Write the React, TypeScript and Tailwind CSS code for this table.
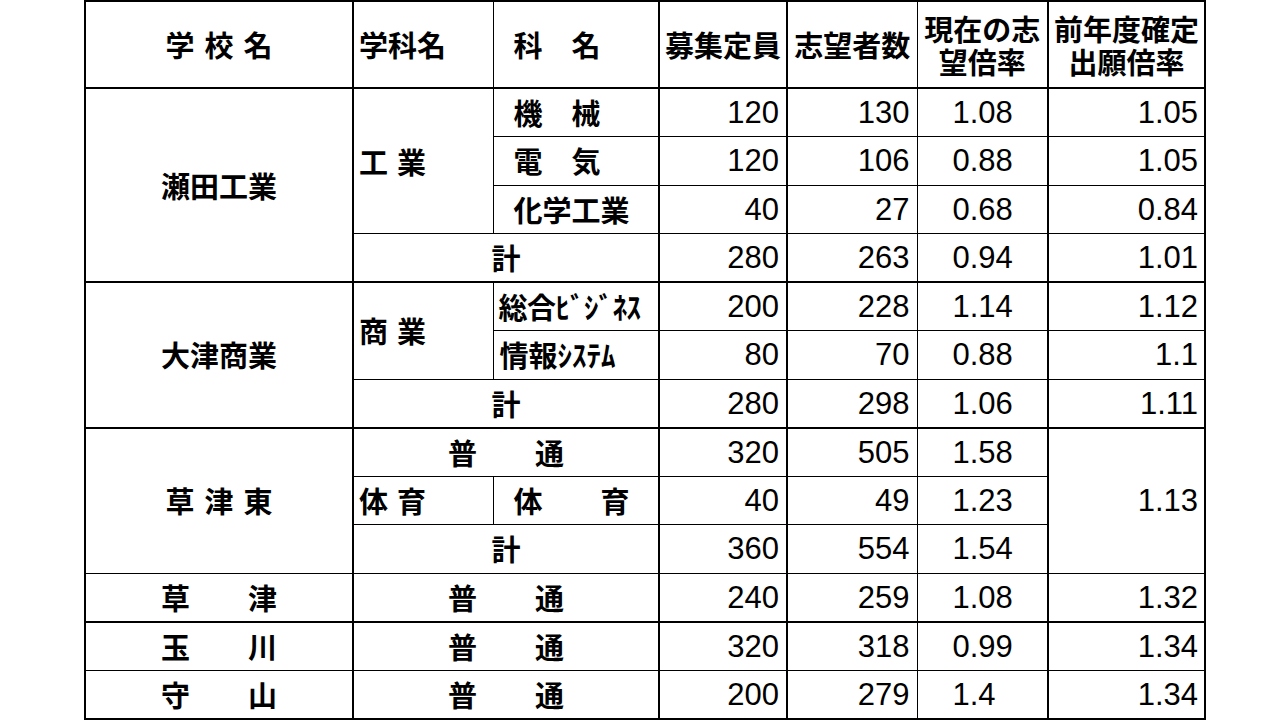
import type { ReactNode } from "react"

const cell = "border border-black p-0 align-middle"
const jp = "font-['Noto_Sans_CJK_JP','Noto_Sans',sans-serif] font-bold text-[29px] leading-none whitespace-nowrap"
const num = "font-['Liberation_Sans',Arial,sans-serif] text-[31px] leading-none"

type Nums = { cap: string; app: string; rate: string; prev?: string; thick?: boolean }

function NumCells({ cap, app, rate, prev, thick }: Nums) {
  const b = thick ? "border-b-2" : ""
  return (
    <>
      <td className={`${cell} ${num} ${b} border-r-2 pr-[7px] text-right`}>{cap}</td>
      <td className={`${cell} ${num} ${b} pr-[7px] text-right`}>{app}</td>
      <td className={`${cell} ${num} ${b} border-r-2 pl-[35px] text-left`}>{rate}</td>
      {prev !== undefined && <td className={`${cell} ${num} ${b} pr-[6px] text-right`}>{prev}</td>}
    </>
  )
}

function Row({ children }: { children: ReactNode }) {
  return <tr className="h-[48.5px]">{children}</tr>
}

export default function App() {
  return (
    <div className="min-h-screen bg-white text-black">
      <table className="ml-[84px] w-[1122px] table-fixed border-collapse border-2 border-black">
        <colgroup>
          <col className="w-[268px]" />
          <col className="w-[140px]" />
          <col className="w-[166px]" />
          <col className="w-[128px]" />
          <col className="w-[130px]" />
          <col className="w-[131px]" />
          <col className="w-[157px]" />
        </colgroup>
        <tbody>
          {/* header */}
          <tr className="h-[87px]">
            <td className={`${cell} ${jp} border-b-2 border-r-2 pl-[10px] text-center tracking-[10px]`}>学校名</td>
            <td className={`${cell} ${jp} border-b-2 pl-[5px] text-left`}>学科名</td>
            <td className={`${cell} ${jp} border-b-2 border-r-2 pl-[20px] text-left`}>科　名</td>
            <td className={`${cell} ${jp} border-b-2 border-r-2 text-center`}>募集定員</td>
            <td className={`${cell} ${jp} border-b-2 text-center`}>志望者数</td>
            <td className={`${cell} ${jp} border-b-2 border-r-2 text-center`}>
              <div className="leading-[29px]">現在の志</div>
              <div className="mt-[4px] leading-[29px]">望倍率</div>
            </td>
            <td className={`${cell} ${jp} border-b-2 text-center`}>
              <div className="leading-[29px]">前年度確定</div>
              <div className="mt-[4px] leading-[29px]">出願倍率</div>
            </td>
          </tr>

          {/* 瀬田工業 */}
          <Row>
            <td rowSpan={4} className={`${cell} ${jp} border-b-2 border-r-2 text-center`}>瀬田工業</td>
            <td rowSpan={3} className={`${cell} ${jp} pl-[5px] text-left tracking-[9px]`}>工業</td>
            <td className={`${cell} ${jp} border-r-2 pl-[20px] text-left`}>機　械</td>
            <NumCells cap="120" app="130" rate="1.08" prev="1.05" />
          </Row>
          <Row>
            <td className={`${cell} ${jp} border-r-2 pl-[20px] text-left`}>電　気</td>
            <NumCells cap="120" app="106" rate="0.88" prev="1.05" />
          </Row>
          <Row>
            <td className={`${cell} ${jp} border-r-2 pl-[20px] text-left`}>化学工業</td>
            <NumCells cap="40" app="27" rate="0.68" prev="0.84" />
          </Row>
          <Row>
            <td colSpan={2} className={`${cell} ${jp} border-b-2 border-r-2 text-center`}>計</td>
            <NumCells cap="280" app="263" rate="0.94" prev="1.01" thick />
          </Row>

          {/* 大津商業 */}
          <Row>
            <td rowSpan={3} className={`${cell} ${jp} border-b-2 border-r-2 text-center`}>大津商業</td>
            <td rowSpan={2} className={`${cell} ${jp} pl-[5px] text-left tracking-[9px]`}>商業</td>
            <td className={`${cell} ${jp} border-r-2 pl-[5px] text-left tracking-[-0.5px]`}>総合ﾋﾞｼﾞﾈｽ</td>
            <NumCells cap="200" app="228" rate="1.14" prev="1.12" />
          </Row>
          <Row>
            <td className={`${cell} ${jp} border-r-2 pl-[6px] text-left`}>情報ｼｽﾃﾑ</td>
            <NumCells cap="80" app="70" rate="0.88" prev="1.1" />
          </Row>
          <Row>
            <td colSpan={2} className={`${cell} ${jp} border-b-2 border-r-2 text-center`}>計</td>
            <NumCells cap="280" app="298" rate="1.06" prev="1.11" thick />
          </Row>

          {/* 草津東 */}
          <Row>
            <td rowSpan={3} className={`${cell} ${jp} border-r-2 pl-[10px] text-center tracking-[10px]`}>草津東</td>
            <td colSpan={2} className={`${cell} ${jp} border-r-2 text-center`}>普　　通</td>
            <NumCells cap="320" app="505" rate="1.58" />
            <td rowSpan={3} className={`${cell} ${num} pr-[6px] text-right`}>1.13</td>
          </Row>
          <Row>
            <td className={`${cell} ${jp} pl-[5px] text-left tracking-[9px]`}>体育</td>
            <td className={`${cell} ${jp} border-r-2 pl-[20px] text-left`}>体　　育</td>
            <NumCells cap="40" app="49" rate="1.23" />
          </Row>
          <Row>
            <td colSpan={2} className={`${cell} ${jp} border-r-2 text-center`}>計</td>
            <NumCells cap="360" app="554" rate="1.54" />
          </Row>

          {/* 普通科のみの学校 */}
          <Row>
            <td className={`${cell} ${jp} border-b-2 border-r-2 text-center`}>草　　津</td>
            <td colSpan={2} className={`${cell} ${jp} border-b-2 border-r-2 text-center`}>普　　通</td>
            <NumCells cap="240" app="259" rate="1.08" prev="1.32" thick />
          </Row>
          <Row>
            <td className={`${cell} ${jp} border-r-2 text-center`}>玉　　川</td>
            <td colSpan={2} className={`${cell} ${jp} border-r-2 text-center`}>普　　通</td>
            <NumCells cap="320" app="318" rate="0.99" prev="1.34" />
          </Row>
          <Row>
            <td className={`${cell} ${jp} border-b-2 border-r-2 text-center`}>守　　山</td>
            <td colSpan={2} className={`${cell} ${jp} border-b-2 border-r-2 text-center`}>普　　通</td>
            <NumCells cap="200" app="279" rate="1.4" prev="1.34" thick />
          </Row>

          {/* 次の行（画面外） */}
          <Row>
            <td className={`${cell} border-r-2`} />
            <td colSpan={2} className={`${cell} border-r-2`} />
            <NumCells cap="" app="" rate="" prev="" />
          </Row>
        </tbody>
      </table>
    </div>
  )
}
